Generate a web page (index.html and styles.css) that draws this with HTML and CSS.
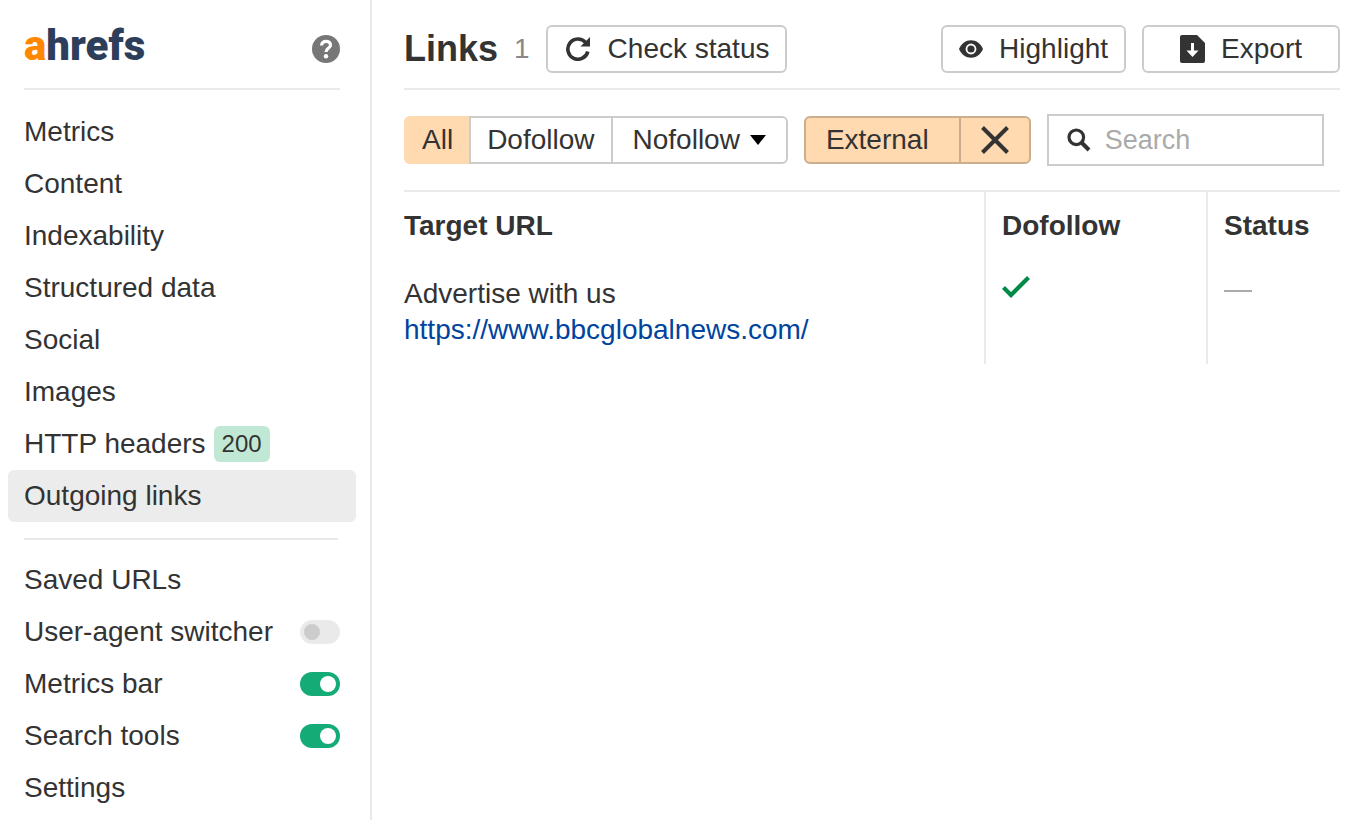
FILE: index.html
```html
<!DOCTYPE html>
<html lang="en">
<head>
<meta charset="utf-8">
<meta name="viewport" content="width=device-width, initial-scale=1">
<title>Outgoing links</title>
<link rel="stylesheet" href="styles.css">
</head>
<body>
<div class="app">
  <aside class="sidebar">
    <div class="sidebar-head">
      <a class="logo" href="#"><span class="logo-accent">a</span>hrefs</a>
      <button class="help" type="button" aria-label="Help">
        <svg width="28" height="28" viewBox="0 0 28 28" aria-hidden="true">
          <circle cx="14" cy="14" r="14" fill="#777"/>
          <path d="M9.600 10.400C9.600 7.800 11.500 6.300 14 6.300S18.500 7.800 18.500 10.200C18.500 13.200 14 13.600 14 17" fill="none" stroke="#fff" stroke-width="3.200"/>
          <circle cx="14" cy="21.200" r="2.200" fill="#fff"/>
        </svg>
      </button>
    </div>
    <nav class="menu">
      <a class="menu-item" href="#">Metrics</a>
      <a class="menu-item" href="#">Content</a>
      <a class="menu-item" href="#">Indexability</a>
      <a class="menu-item" href="#">Structured data</a>
      <a class="menu-item" href="#">Social</a>
      <a class="menu-item" href="#">Images</a>
      <a class="menu-item" href="#">HTTP headers <span class="badge">200</span></a>
      <a class="menu-item menu-item-active" href="#" aria-current="page">Outgoing links</a>
    </nav>
    <hr class="divider">
    <div class="menu">
      <a class="menu-item" href="#">Saved URLs</a>
      <label class="menu-item">User-agent switcher <input class="toggle" type="checkbox"></label>
      <label class="menu-item">Metrics bar <input class="toggle" type="checkbox" checked></label>
      <label class="menu-item">Search tools <input class="toggle" type="checkbox" checked></label>
      <a class="menu-item" href="#">Settings</a>
    </div>
  </aside>

  <main class="content">
    <header class="content-head">
      <h1 class="title">Links</h1>
      <span class="count">1</span>
      <button class="button button-status" type="button">
        <svg width="24" height="24" viewBox="0 0 24 24" aria-hidden="true">
          <path d="M19.500 5.400A10.100 10.100 0 1 0 21.800 14.500" fill="none" stroke="#333" stroke-width="3.600"/>
          <path d="M24 0V9.500H14.500Z" fill="#333"/>
        </svg>
        Check status
      </button>
      <div class="head-actions">
        <button class="button button-highlight" type="button">
          <svg width="24" height="18" viewBox="0 0 24 18" aria-hidden="true">
            <path d="M0 9C2.500 3.200 6.800 0.300 12 0.300S21.500 3.200 24 9C21.500 14.800 17.200 17.700 12 17.700S2.500 14.800 0 9Z" fill="#333"/>
            <circle cx="12" cy="9" r="4.500" fill="#333" stroke="#fff" stroke-width="1.800"/>
          </svg>
          Highlight
        </button>
        <button class="button button-export" type="button">
          <svg width="25" height="28" viewBox="0 0 25 28" aria-hidden="true">
            <path d="M2 0H17L25 8V26Q25 28 23 28H2Q0 28 0 26V2Q0 0 2 0Z" fill="#333"/>
            <path d="M11 8H14V15.500H18.500L12.500 22L6.500 15.500H11Z" fill="#fff"/>
          </svg>
          Export
        </button>
      </div>
    </header>

    <div class="filters">
      <div class="segments" role="group" aria-label="Link type">
        <button class="segment segment-active" type="button" aria-pressed="true">All</button>
        <button class="segment" type="button">Dofollow</button>
        <button class="segment segment-menu" type="button" aria-haspopup="menu">Nofollow
          <svg width="16" height="10" viewBox="0 0 16 10" aria-hidden="true"><path d="M0 0H16L8 10Z" fill="#000"/></svg>
        </button>
      </div>
      <div class="chip">
        <button class="chip-label" type="button">External</button>
        <button class="chip-clear" type="button" aria-label="Remove External filter">
          <svg width="28" height="28" viewBox="0 0 28 28" aria-hidden="true"><path d="M1.500 1.500L26.500 26.500M26.500 1.500L1.500 26.500" stroke="#333" stroke-width="4"/></svg>
        </button>
      </div>
      <label class="search">
        <svg width="24" height="24" viewBox="0 0 24 24" aria-hidden="true">
          <circle cx="9.300" cy="9.300" r="7.300" fill="none" stroke="#333" stroke-width="3.200"/>
          <path d="M14 14L22 22" stroke="#333" stroke-width="4"/>
        </svg>
        <input class="search-input" type="search" placeholder="Search" aria-label="Search">
      </label>
    </div>

    <table class="links">
      <thead>
        <tr><th>Target URL</th><th class="col-follow">Dofollow</th><th class="col-status">Status</th></tr>
      </thead>
      <tbody>
        <tr>
          <td>Advertise with us<br><a class="url" href="#">https://www.bbcglobalnews.com/</a></td>
          <td>
            <svg width="28" height="22" viewBox="0 0 28 22" role="img" aria-label="Yes"><path d="M1.500 11.500L9 19L26.500 1.500" fill="none" stroke="#008a46" stroke-width="4.200"/></svg>
          </td>
          <td>
            <svg width="28" height="30" viewBox="0 0 28 30" role="img" aria-label="None"><path d="M0 15H28" stroke="#aaa" stroke-width="2"/></svg>
          </td>
        </tr>
      </tbody>
    </table>
  </main>
</div>
</body>
</html>
```
FILE: styles.css
```css
* { box-sizing: border-box; }

body {
  margin: 0;
  background: #fff;
  color: #333;
  font: 28px/36px "Liberation Sans", Arial, sans-serif;
}

button, input { font: inherit; color: inherit; }
button { padding: 0; border: 0; background: none; cursor: pointer; white-space: nowrap; }
a { color: inherit; text-decoration: none; }
svg { display: block; flex: none; }

.app { display: flex; min-height: 100vh; }

/* Sidebar */
.sidebar {
  flex: none;
  width: 372px;
  padding: 0 14px 0 8px;
  border-right: 2px solid #eaeaea;
}
.sidebar-head {
  display: flex;
  align-items: center;
  justify-content: space-between;
  margin: 0 16px 16px;
  padding: 25px 0 15px;
  border-bottom: 2px solid #eaeaea;
}
.logo {
  padding-bottom: 6px;
  color: #2d3e5b;
  font: 900 42px/42px Roboto, sans-serif;
}
.logo-accent { color: #ff8800; }
.menu-item {
  display: flex;
  align-items: center;
  padding: 8px 16px;
  border-radius: 6px;
}
.menu-item-active { background: #ececec; }
.badge {
  margin-left: 8px;
  padding: 0 8px;
  border-radius: 6px;
  background: #c1e8d5;
  font-size: 24px;
}
.divider {
  margin: 16px 18px 14px 16px;
  border: 0;
  border-top: 2px solid #eaeaea;
}
.toggle {
  appearance: none;
  display: flex;
  width: 40px;
  height: 24px;
  margin: 0 0 0 auto;
  padding: 4px;
  border-radius: 12px;
  background: #eaeaea;
}
.toggle::before {
  content: "";
  width: 16px;
  height: 16px;
  border-radius: 50%;
  background: #ccc;
}
.toggle:checked { justify-content: flex-end; background: #14ab77; }
.toggle:checked::before { background: #fff; }

/* Content header */
.content { flex: 1; min-width: 0; padding: 0 20px 0 32px; }
.content-head {
  display: flex;
  align-items: center;
  padding: 25px 0 15px;
  border-bottom: 2px solid #eaeaea;
}
.title { margin: 0; font-size: 36px; line-height: 36px; }
.count { margin: 0 16px; color: #888; }
.button {
  display: flex;
  align-items: center;
  gap: 16px;
  height: 48px;
  padding: 0 16px;
  border: 2px solid #ccc;
  border-radius: 6px;
}
.button-status { gap: 18px; padding-left: 18px; }
.button-export { padding: 0 36px; }
.head-actions { display: flex; gap: 16px; margin-left: auto; }

/* Filters */
.filters {
  display: flex;
  align-items: center;
  gap: 16px;
  padding: 24px 16px 24px 0;
}
.segments { display: flex; height: 48px; }
.segment {
  display: flex;
  align-items: center;
  padding: 0 16px;
  border: 2px solid #ccc;
  border-left-width: 0;
}
.segment-active {
  padding: 0 16px 0 18px;
  border: 0;
  border-radius: 6px 0 0 6px;
  background: #ffd9b0;
}
.segment-active + .segment { border-left-width: 2px; }
.segment-menu { gap: 10px; padding: 0 20px; border-radius: 0 6px 6px 0; }
.chip {
  display: flex;
  height: 48px;
  border: 2px solid #ccae8c;
  border-radius: 6px;
  background: #ffd9b0;
}
.chip-label { padding: 0 30px 0 20px; }
.chip-clear { padding: 0 20px; border-left: 2px solid #ccae8c; }
.search {
  display: flex;
  flex: 1;
  align-items: center;
  gap: 14px;
  min-width: 0;
  height: 52px;
  padding: 0 18px;
  border: 2px solid #ccc;
}
.search-input {
  flex: 1;
  width: 0;
  padding: 0;
  border: 0;
  outline: 0;
  background: none;
  font-size: 27px;
}
.search-input::placeholder { color: #aaa; opacity: 1; }

/* Links table */
.links {
  width: 100%;
  table-layout: fixed;
  border-collapse: separate;
  border-spacing: 0;
  border-top: 2px solid #eaeaea;
}
.links th, .links td { padding: 16px; text-align: left; vertical-align: top; }
.links th:first-child, .links td:first-child { padding-left: 0; }
.links th + th, .links td + td { border-left: 2px solid #eaeaea; }
.col-follow { width: 222px; }
.col-status { width: 134px; }
.url { color: #00449e; }
```
